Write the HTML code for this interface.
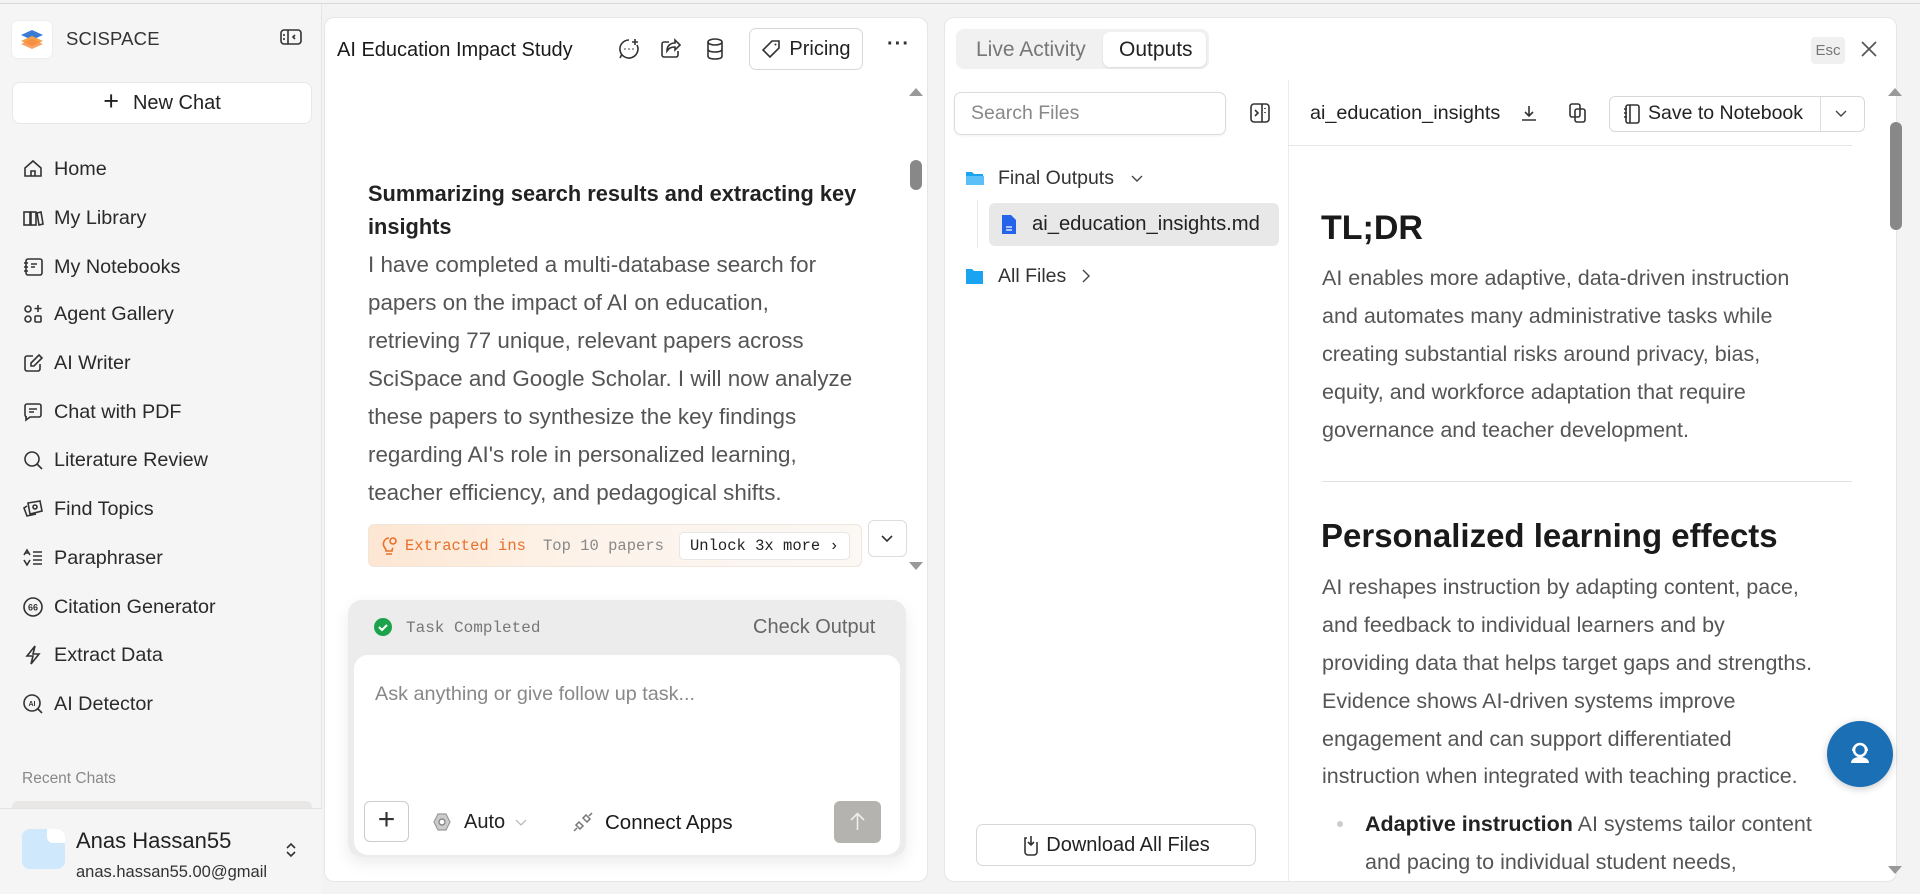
<!DOCTYPE html>
<html><head><meta charset="utf-8">
<style>
*{box-sizing:border-box;margin:0;padding:0}
body{width:1920px;height:894px;background:#f3f3f3;font-family:"Liberation Sans",sans-serif;position:relative;overflow:hidden;color:#1f1f1f}
.abs{position:absolute}
.topline{position:absolute;left:0;top:3px;width:1920px;height:1px;background:#d8d8d8}
.nav{position:absolute;left:22px;font-size:19.8px;color:#2a2a2a;display:flex;align-items:center;height:30px}
.nav svg{width:22px;height:22px;margin-right:10px;stroke:#333;fill:none;stroke-width:1.6}
.panel{position:absolute;background:#fff;border:1px solid #e6e6e6;border-radius:10px}
.line{position:absolute;white-space:nowrap}
.mid p{position:absolute;left:368px;font-size:22.4px;color:#555;white-space:nowrap}
.rt p{position:absolute;left:1322px;font-size:21.5px;color:#555;white-space:nowrap}
.ic{stroke:#333;fill:none;stroke-width:1.6}
</style></head><body>
<div class="topline"></div>
<!-- Sidebar -->
<div class="abs" style="left:0;top:4px;width:322px;height:890px;background:#f5f5f5;border-right:1px solid #e4e4e4"></div>
<div class="abs" style="left:12px;top:21px;width:40px;height:37px;background:#fff;border-radius:6px;box-shadow:0 0 2px rgba(0,0,0,.08)">
<svg width="40" height="37" viewBox="0 0 40 37"><path d="M9 14 L20 9 L31 14 L20 19Z" fill="#3a7bd5"/><path d="M9 20 L20 15 L31 20 L20 25Z" fill="#f7a04b"/><path d="M9 23 L20 18 L31 23 L20 28Z" fill="#f58a3c" opacity=".8"/></svg></div>
<div class="line" style="left:66px;top:28px;font-size:18.5px;letter-spacing:.2px;color:#333">SCISPACE</div>
<svg class="abs" style="left:280px;top:28px" width="22" height="18" viewBox="0 0 22 18"><rect x="1" y="2" width="20" height="14" rx="3" class="ic"/><line x1="8" y1="2" x2="8" y2="16" class="ic"/><path d="M4 6v2M4 10v2M15 7l-2 2 2 2" class="ic"/></svg>
<div class="abs" style="left:12px;top:82px;width:300px;height:42px;background:#fff;border:1px solid #e8e8e8;border-radius:8px;font-size:20px;display:flex;align-items:center;justify-content:center;color:#222"><span style="font-size:27px;font-weight:300;margin-right:14px;margin-top:-3px">+</span>New Chat</div>

<div class="nav" style="top:154px"><svg viewBox="0 0 22 22"><path d="M3 10 L11 3 L19 10 V18 H3Z M9 18v-5h4v5"/></svg>Home</div>
<div class="nav" style="top:203px"><svg viewBox="0 0 22 22"><rect x="2" y="5" width="6" height="13"/><rect x="9" y="5" width="5" height="13"/><path d="M15 6l4 -1 2 12-4 1z"/></svg>My Library</div>
<div class="nav" style="top:252px"><svg viewBox="0 0 22 22"><rect x="4" y="3" width="16" height="16" rx="2"/><path d="M2 7h4M2 11h4M2 15h4M9 8h6M9 11h4"/></svg>My Notebooks</div>
<div class="nav" style="top:299px"><svg viewBox="0 0 22 22"><circle cx="6" cy="6" r="3"/><circle cx="6" cy="16" r="3"/><rect x="13" y="13" width="6" height="6" rx="1"/><path d="M16 2v7M12.5 5.5h7"/></svg>Agent Gallery</div>
<div class="nav" style="top:348px"><svg viewBox="0 0 22 22"><path d="M11 4H5a2 2 0 0 0-2 2v11a2 2 0 0 0 2 2h11a2 2 0 0 0 2-2v-5"/><path d="M17 3l3 3-8 8H9v-3z"/></svg>AI Writer</div>
<div class="nav" style="top:397px"><svg viewBox="0 0 22 22"><path d="M3 5a2 2 0 0 1 2-2h12a2 2 0 0 1 2 2v9a2 2 0 0 1-2 2H8l-4 3v-3H5a2 2 0 0 1-2-2z"/><path d="M7 8h8M7 11h5"/></svg>Chat with PDF</div>
<div class="nav" style="top:445px"><svg viewBox="0 0 22 22"><circle cx="10" cy="10" r="7"/><path d="M15 15l5 5"/></svg>Literature Review</div>
<div class="nav" style="top:494px"><svg viewBox="0 0 22 22"><path d="M6 5l12-2 2 10-12 3z"/><path d="M5 8 2 10l3 8 9-2"/><circle cx="13" cy="9" r="2"/></svg>Find Topics</div>
<div class="nav" style="top:543px"><svg viewBox="0 0 22 22"><path d="M2 8l3-5 3 5M3 6h4M2 13l3 5 3-5M11 5h9M11 9h9M11 13h9M11 17h9"/></svg>Paraphraser</div>
<div class="nav" style="top:592px"><svg viewBox="0 0 22 22"><circle cx="11" cy="11" r="9"/><text x="11" y="14.5" font-size="9" text-anchor="middle" fill="#333" stroke="none" font-weight="bold" font-family="Liberation Sans">66</text></svg>Citation Generator</div>
<div class="nav" style="top:640px"><svg viewBox="0 0 22 22"><path d="M13 2 5 12h6l-2 8 8-10h-6z"/></svg>Extract Data</div>
<div class="nav" style="top:689px"><svg viewBox="0 0 22 22"><circle cx="10" cy="10" r="8"/><path d="M16 16l4 4"/><text x="10" y="13" font-size="7" text-anchor="middle" fill="#333" stroke="none" font-weight="bold" font-family="Liberation Sans">AI</text></svg>AI Detector</div>
<div class="line" style="left:22px;top:770px;font-size:15.5px;color:#888">Recent Chats</div>
<div class="abs" style="left:12px;top:801px;width:300px;height:10px;background:#e9e7e6;border-radius:6px 6px 0 0"></div>
<div class="abs" style="left:0;top:808px;width:322px;height:86px;background:#f5f5f5;border-top:1px solid #e2e2e2"></div>
<div class="abs" style="left:22px;top:829px;width:43px;height:40px;background:#cfe8fb;border-radius:8px"></div>
<div class="abs" style="left:47px;top:829px;width:18px;height:14px;background:#fff;border-radius:0 8px 0 6px"></div>
<div class="line" style="left:76px;top:828px;font-size:22px;color:#222">Anas Hassan55</div>
<div class="line" style="left:76px;top:863px;font-size:16.5px;color:#333">anas.hassan55.00@gmail</div>
<svg class="abs" style="left:284px;top:841px" width="14" height="18" viewBox="0 0 14 18"><path d="M3 7l4-4 4 4M3 11l4 4 4-4" class="ic" stroke-width="1.4"/></svg>

<!-- Middle panel -->
<div class="panel" style="left:324px;top:17px;width:604px;height:865px"></div>
<div class="line" style="left:337px;top:39px;font-size:20px;font-weight:500;color:#1a1a1a">AI Education Impact Study</div>
<svg class="abs" style="left:617px;top:37px" width="24" height="24" viewBox="0 0 24 24"><path d="M12 3a9 9 0 1 0 8 5M3 21l2-4" class="ic"/><path d="M18 2v6M15 5h6" class="ic"/><circle cx="8" cy="12" r=".8" fill="#333"/><circle cx="12" cy="12" r=".8" fill="#333"/><circle cx="16" cy="12" r=".8" fill="#333"/></svg>
<svg class="abs" style="left:659px;top:37px" width="24" height="24" viewBox="0 0 24 24"><path d="M10 5H5a2 2 0 0 0-2 2v11a2 2 0 0 0 2 2h12a2 2 0 0 0 2-2v-4" class="ic"/><path d="M21 8l-5-5v3c-5 0-8 3-8 8 2-3 4-4 8-4v3z" class="ic"/></svg>
<svg class="abs" style="left:704px;top:37px" width="22" height="24" viewBox="0 0 22 24"><ellipse cx="11" cy="5" rx="7" ry="3" class="ic"/><path d="M4 5v14c0 2 3 3 7 3s7-1 7-3V5M4 12c0 2 3 3 7 3s7-1 7-3" class="ic"/></svg>
<div class="abs" style="left:749px;top:28px;width:114px;height:42px;border:1px solid #d8d8d8;border-radius:7px;display:flex;align-items:center;justify-content:center;font-size:20px;color:#222"><svg width="20" height="20" viewBox="0 0 20 20" style="margin-right:8px"><path d="M11 2h7v7l-9 9-7-7z" class="ic"/><circle cx="14.5" cy="5.5" r="1" fill="#333"/></svg>Pricing</div>
<div class="line" style="left:887px;top:33px;font-size:20px;color:#333;letter-spacing:1px;font-weight:bold">···</div>
<div class="abs" style="left:909px;top:88px;width:0;height:0;border-left:7px solid transparent;border-right:7px solid transparent;border-bottom:8px solid #999"></div>
<div class="abs" style="left:909px;top:562px;width:0;height:0;border-left:7px solid transparent;border-right:7px solid transparent;border-top:8px solid #999"></div>
<div class="abs" style="left:910px;top:160px;width:12px;height:30px;background:#888;border-radius:6px"></div>
<div class="mid">
<div class="line" style="left:368px;top:181px;font-size:21.8px;font-weight:bold;color:#222">Summarizing search results and extracting key</div>
<div class="line" style="left:368px;top:214px;font-size:21.8px;font-weight:bold;color:#222">insights</div>
<p style="top:252px">I have completed a multi-database search for</p>
<p style="top:290px">papers on the impact of AI on education,</p>
<p style="top:328px">retrieving 77 unique, relevant papers across</p>
<p style="top:366px">SciSpace and Google Scholar. I will now analyze</p>
<p style="top:404px">these papers to synthesize the key findings</p>
<p style="top:442px">regarding AI's role in personalized learning,</p>
<p style="top:480px">teacher efficiency, and pedagogical shifts.</p>
</div>
<div class="abs" style="left:368px;top:524px;width:494px;height:43px;border:1px solid #f0e6dc;border-radius:6px;background:linear-gradient(90deg,#fde6d2,#fdf2e8 40%,#fbf8f5);font-family:'Liberation Mono',monospace;font-size:15.5px;white-space:nowrap;overflow:hidden">
<svg class="abs" style="left:10px;top:10px" width="20" height="22" viewBox="0 0 20 22"><path d="M10 3a6 6 0 0 0-4 10c1 1 1 2 1 3h6c0-1 0-2 1-3M7 19h6" fill="none" stroke="#e8702a" stroke-width="1.6"/><circle cx="14" cy="6" r="3" fill="none" stroke="#e8702a" stroke-width="1.6"/></svg>
<span class="abs" style="left:36px;top:12px;color:#e8702a;width:128px;overflow:hidden">Extracted ins</span>
<span class="abs" style="left:174px;top:12px;color:#888">Top 10 papers</span>
<span class="abs" style="left:310px;top:7px;height:28px;padding:4px 10px;background:#fff;border:1px solid #e6e6e6;border-radius:5px;color:#222">Unlock 3x more ›</span>
</div>
<div class="abs" style="left:868px;top:520px;width:39px;height:37px;border:1px solid #ddd;border-radius:6px;background:#fff"><svg width="37" height="35" viewBox="0 0 37 35"><path d="M13 15l5 5 5-5" class="ic" stroke-width="1.5"/></svg></div>

<div class="abs" style="left:348px;top:600px;width:558px;height:257px;background:#ececec;border-radius:14px;box-shadow:0 6px 16px rgba(0,0,0,.08)"></div>
<svg class="abs" style="left:373px;top:617px" width="20" height="20" viewBox="0 0 20 20"><circle cx="10" cy="10" r="9" fill="#1aa34a"/><path d="M6 10l3 3 5-5" fill="none" stroke="#fff" stroke-width="2"/></svg>
<div class="line" style="left:406px;top:619px;font-family:'Liberation Mono',monospace;font-size:16px;color:#777">Task Completed</div>
<div class="line" style="left:753px;top:616px;font-size:20px;color:#666">Check Output</div>
<div class="abs" style="left:354px;top:655px;width:546px;height:200px;background:#fff;border-radius:14px"></div>
<div class="line" style="left:375px;top:683px;font-size:19.8px;color:#888">Ask anything or give follow up task...</div>
<div class="abs" style="left:364px;top:801px;width:45px;height:41px;border:1px solid #ccc;border-radius:6px;font-size:30px;font-weight:300;text-align:center;line-height:36px;color:#333">+</div>
<svg class="abs" style="left:431px;top:811px" width="22" height="22" viewBox="0 0 22 22"><path d="M7 3h8l4 8-4 8H7l-4-8z" fill="#ccc" stroke="#999" stroke-width="1.2"/><circle cx="11" cy="11" r="3" fill="#fff" stroke="#888" stroke-width="1.4"/></svg>
<div class="line" style="left:464px;top:811px;font-size:20px;color:#222">Auto</div>
<svg class="abs" style="left:514px;top:817px" width="14" height="10" viewBox="0 0 14 10"><path d="M2 3l5 5 5-5" fill="none" stroke="#bbb" stroke-width="1.3"/></svg>
<svg class="abs" style="left:571px;top:810px" width="24" height="24" viewBox="0 0 24 24"><path d="M3 21l3-3M21 3l-3 3M8 12l-3 3 4 4 3-3zM16 12l3-3-4-4-3 3z" fill="none" stroke="#777" stroke-width="1.5"/></svg>
<div class="line" style="left:605px;top:811px;font-size:20.5px;color:#1a1a1a">Connect Apps</div>
<div class="abs" style="left:834px;top:801px;width:47px;height:42px;background:#b5b3b0;border-radius:6px"><svg width="47" height="42" viewBox="0 0 47 42"><path d="M23.5 29V13M17 19l6.5-6.5L30 19" fill="none" stroke="#eee" stroke-width="1.6"/></svg></div>

<!-- Right panel -->
<div class="panel" style="left:944px;top:17px;width:953px;height:865px"></div>
<div class="abs" style="left:956px;top:29px;width:253px;height:40px;background:#f1f1f1;border-radius:8px"></div>
<div class="abs" style="left:1103px;top:32px;width:103px;height:35px;background:#fff;border-radius:7px;box-shadow:0 1px 2px rgba(0,0,0,.1)"></div>
<div class="line" style="left:976px;top:38px;font-size:21px;color:#777">Live Activity</div>
<div class="line" style="left:1119px;top:38px;font-size:21px;color:#222">Outputs</div>
<div class="abs" style="left:1811px;top:37px;width:34px;height:27px;background:#f0f0f0;border-radius:4px;font-size:15px;color:#777;text-align:center;line-height:27px">Esc</div>
<svg class="abs" style="left:1859px;top:39px" width="20" height="20" viewBox="0 0 20 20"><path d="M3 3l14 14M17 3 3 17" stroke="#555" stroke-width="1.7"/></svg>
<div class="abs" style="left:1288px;top:80px;width:1px;height:801px;background:#ececec"></div>
<div class="abs" style="left:954px;top:92px;width:272px;height:43px;border:1px solid #dcdcdc;border-radius:7px;box-shadow:0 1px 2px rgba(0,0,0,.06)"></div>
<div class="line" style="left:971px;top:102px;font-size:19.5px;color:#888">Search Files</div>
<svg class="abs" style="left:1249px;top:102px" width="22" height="22" viewBox="0 0 22 22"><rect x="2" y="2" width="18" height="18" rx="3" class="ic"/><path d="M13 2v18M6 8l3 3-3 3M16 6v1M16 10v1" class="ic"/></svg>
<svg class="abs" style="left:965px;top:168px" width="20" height="20" viewBox="0 0 20 20"><path d="M1 4h6l2 2h9v11H1z" fill="#1aa3f0"/><path d="M1 8h18v9H1z" fill="#5bc0f8"/></svg>
<div class="line" style="left:998px;top:167px;font-size:19.5px;color:#333">Final Outputs</div>
<svg class="abs" style="left:1130px;top:173px" width="14" height="12" viewBox="0 0 14 12"><path d="M2 3l5 5 5-5" fill="none" stroke="#444" stroke-width="1.4"/></svg>
<div class="abs" style="left:977px;top:200px;width:1px;height:48px;background:#e6e6e6"></div>
<div class="abs" style="left:989px;top:203px;width:290px;height:43px;background:#e8e8e8;border-radius:6px"></div>
<svg class="abs" style="left:1001px;top:214px" width="16" height="21" viewBox="0 0 16 21"><path d="M1 1h9l5 5v14H1z" fill="#2563eb"/><path d="M5 13h6M5 16h6" stroke="#fff" stroke-width="1.2"/></svg>
<div class="line" style="left:1032px;top:213px;font-size:20.2px;color:#222">ai_education_insights.md</div>
<svg class="abs" style="left:965px;top:266px" width="20" height="20" viewBox="0 0 20 20"><path d="M1 3h6l2 2h9v13H1z" fill="#1aa3f0"/></svg>
<div class="line" style="left:998px;top:265px;font-size:19.5px;color:#333">All Files</div>
<svg class="abs" style="left:1081px;top:268px" width="10" height="16" viewBox="0 0 10 16"><path d="M2 2l6 6-6 6" fill="none" stroke="#444" stroke-width="1.4"/></svg>
<div class="abs" style="left:976px;top:824px;width:280px;height:42px;border:1px solid #d8d8d8;border-radius:7px;display:flex;align-items:center;justify-content:center;font-size:20px;color:#222"><svg width="18" height="22" viewBox="0 0 18 22" style="margin-right:6px"><path d="M5 4H3v14a3 3 0 0 0 3 3h6a3 3 0 0 0 3-3V8M9 2v9M6 8l3 3 3-3" class="ic" stroke-width="1.4"/></svg>Download All Files</div>

<div class="line" style="left:1310px;top:102px;font-size:19.8px;color:#222">ai_education_insights</div>
<svg class="abs" style="left:1519px;top:103px" width="20" height="20" viewBox="0 0 20 20"><path d="M10 3v10M6 9l4 4 4-4M3 17h14" class="ic"/></svg>
<svg class="abs" style="left:1568px;top:102px" width="20" height="22" viewBox="0 0 20 22"><rect x="2" y="2" width="10" height="13" rx="2" class="ic"/><rect x="7" y="7" width="10" height="13" rx="2" fill="#fff" class="ic"/></svg>
<div class="abs" style="left:1609px;top:96px;width:256px;height:36px;border:1px solid #d8d8d8;border-radius:6px"></div>
<div class="abs" style="left:1820px;top:97px;width:1px;height:34px;background:#ddd"></div>
<svg class="abs" style="left:1623px;top:103px" width="18" height="22" viewBox="0 0 18 22"><rect x="3" y="2" width="13" height="18" rx="2" class="ic"/><path d="M1 6h3M1 10h3M1 14h3M7 2v18" class="ic"/></svg>
<div class="line" style="left:1648px;top:102px;font-size:19.5px;color:#222">Save to Notebook</div>
<svg class="abs" style="left:1833px;top:108px" width="16" height="12" viewBox="0 0 16 12"><path d="M3 3l5 5 5-5" fill="none" stroke="#444" stroke-width="1.4"/></svg>
<div class="abs" style="left:1288px;top:145px;width:564px;height:1px;background:#e6e6e6"></div>
<div class="abs" style="left:1888px;top:88px;width:0;height:0;border-left:7px solid transparent;border-right:7px solid transparent;border-bottom:8px solid #999"></div>
<div class="abs" style="left:1888px;top:866px;width:0;height:0;border-left:7px solid transparent;border-right:7px solid transparent;border-top:8px solid #999"></div>
<div class="abs" style="left:1890px;top:122px;width:12px;height:108px;background:#888;border-radius:6px"></div>
<div class="rt">
<div class="line" style="left:1321px;top:209px;font-size:34px;font-weight:600;color:#1a1a1a">TL;DR</div>
<p style="top:266px">AI enables more adaptive, data-driven instruction</p>
<p style="top:304px">and automates many administrative tasks while</p>
<p style="top:342px">creating substantial risks around privacy, bias,</p>
<p style="top:380px">equity, and workforce adaptation that require</p>
<p style="top:418px">governance and teacher development.</p>
<div class="abs" style="left:1322px;top:481px;width:530px;height:1px;background:#e2e2e2"></div>
<div class="line" style="left:1321px;top:517px;font-size:33px;font-weight:600;color:#1a1a1a">Personalized learning effects</div>
<p style="top:575px">AI reshapes instruction by adapting content, pace,</p>
<p style="top:613px">and feedback to individual learners and by</p>
<p style="top:651px">providing data that helps target gaps and strengths.</p>
<p style="top:689px">Evidence shows AI-driven systems improve</p>
<p style="top:727px">engagement and can support differentiated</p>
<p style="top:764px">instruction when integrated with teaching practice.</p>
<div class="abs" style="left:1337px;top:821px;width:6px;height:6px;border-radius:50%;background:#ccc"></div>
<p style="top:812px;left:1365px"><b style="color:#222;font-weight:600">Adaptive instruction</b> AI systems tailor content</p>
<p style="top:850px;left:1365px">and pacing to individual student needs,</p>
</div>
<div class="abs" style="left:1827px;top:721px;width:66px;height:66px;border-radius:50%;background:#1a6fb5;box-shadow:0 2px 8px rgba(0,0,0,.2)"><svg width="66" height="66" viewBox="0 0 66 66"><circle cx="33" cy="29" r="6" fill="none" stroke="#fff" stroke-width="2.5"/><path d="M24 42c0-4 4-6 9-6s9 2 9 6z" fill="#fff"/><path d="M26 30a7 7 0 0 1 14 0" fill="none" stroke="#fff" stroke-width="2"/></svg></div>
</body></html>
